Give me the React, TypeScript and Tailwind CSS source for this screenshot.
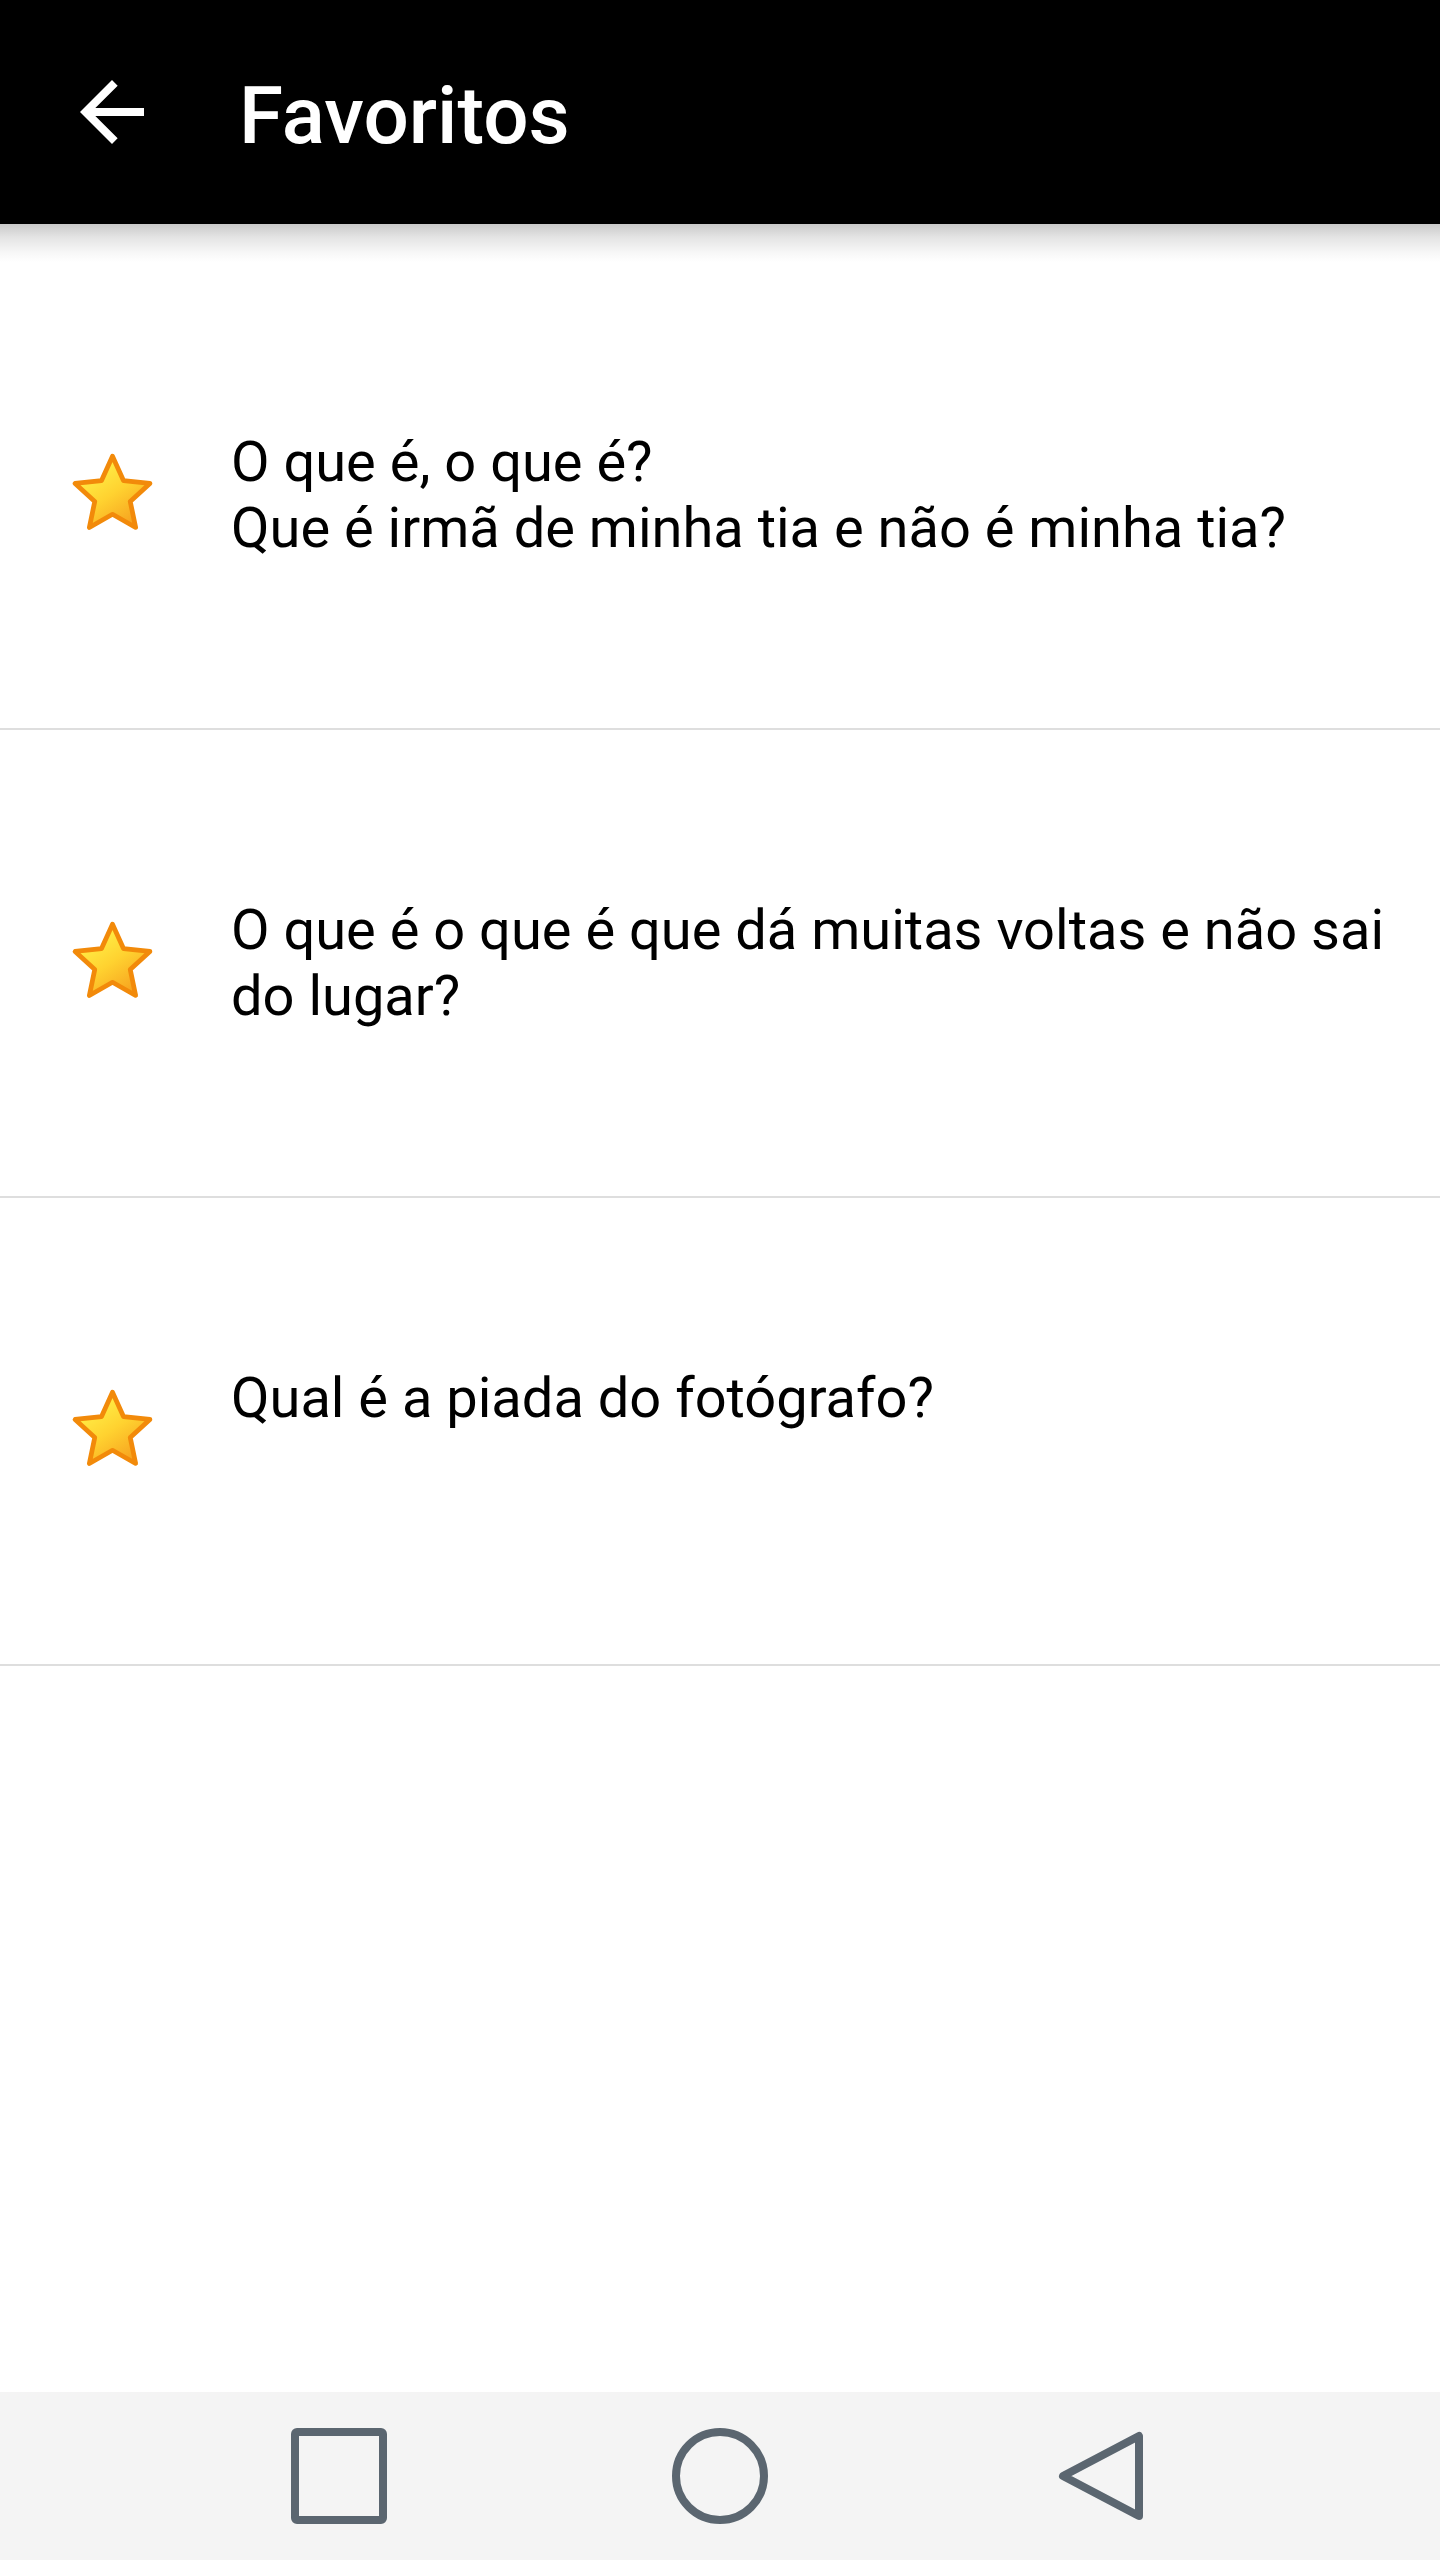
import React from "react";

const items = [
  ["O que é, o que é?", "Que é irmã de minha tia e não é minha tia?"],
  ["O que é o que é que dá muitas voltas e não sai do lugar?"],
  ["Qual é a piada do fotógrafo?"],
];

function Star() {
  return (
    <svg width="87" height="83" viewBox="0 0 84 80" className="block">
      <defs>
        <linearGradient id="starFill" x1="0.2" y1="0.1" x2="0.8" y2="0.95">
          <stop offset="0" stopColor="#fff34a" />
          <stop offset="0.5" stopColor="#ffd230" />
          <stop offset="1" stopColor="#f6a01e" />
        </linearGradient>
      </defs>
      <polygon
        points="42,6 52.58,29.44 78.14,32.26 59.12,49.56 64.34,74.74 42,62 19.66,74.74 24.88,49.56 5.86,32.26 31.42,29.44"
        fill="url(#starFill)"
        stroke="#f28a0a"
        strokeWidth="4.6"
        strokeLinejoin="round"
      />
    </svg>
  );
}

export default function App() {
  return (
    <div
      className="w-[1440px] h-[2560px] bg-white flex flex-col overflow-hidden"
      style={{ fontFamily: "Roboto, 'Noto Sans', Arial, sans-serif" }}
    >
      <header className="h-[224px] shrink-0 bg-black flex items-center pl-[64px]">
        <svg width="96" height="96" viewBox="0 0 24 24" className="block shrink-0">
          <path
            d="M20 11H7.83l5.59-5.59L12 4l-8 8 8 8 1.41-1.41L7.83 13H20v-2z"
            fill="#ffffff"
          />
        </svg>
        <h1 className="ml-[79px] mt-[8px] text-white text-[80px] leading-[80px] font-medium">
          Favoritos
        </h1>
      </header>
      <div className="h-[38px] shrink-0 bg-[linear-gradient(to_bottom,#c9c9c9,#e4e4e4_35%,#f7f7f7_75%,#ffffff)]" />
      <main className="flex-1 flex flex-col">
        {items.map((lines, i) => (
          <div
            key={i}
            className="h-[468px] shrink-0 border-b-2 border-[#dedede] flex items-center"
          >
            <div className="w-[231px] shrink-0 pl-[69px] pb-[8px]">
              <Star />
            </div>
            <div className="flex-1 pr-[40px] min-h-[132px] text-black text-[56px] leading-[66px]">
              {lines.map((l, j) => (
                <div key={j}>{l}</div>
              ))}
            </div>
          </div>
        ))}
      </main>
      <nav className="h-[168px] shrink-0 bg-[#f4f4f4] flex items-center justify-center gap-[285px]">
        <svg width="96" height="96" viewBox="0 0 96 96" className="block">
          <rect x="4" y="4" width="88" height="88" rx="2" fill="none" stroke="#5b6670" strokeWidth="8" />
        </svg>
        <svg width="96" height="96" viewBox="0 0 96 96" className="block">
          <circle cx="48" cy="48" r="44" fill="none" stroke="#5b6670" strokeWidth="8" />
        </svg>
        <svg width="96" height="96" viewBox="0 0 96 96" className="block">
          <polygon
            points="86,8 86,88 10,48"
            fill="none"
            stroke="#5b6670"
            strokeWidth="8"
            strokeLinejoin="round"
          />
        </svg>
      </nav>
    </div>
  );
}
